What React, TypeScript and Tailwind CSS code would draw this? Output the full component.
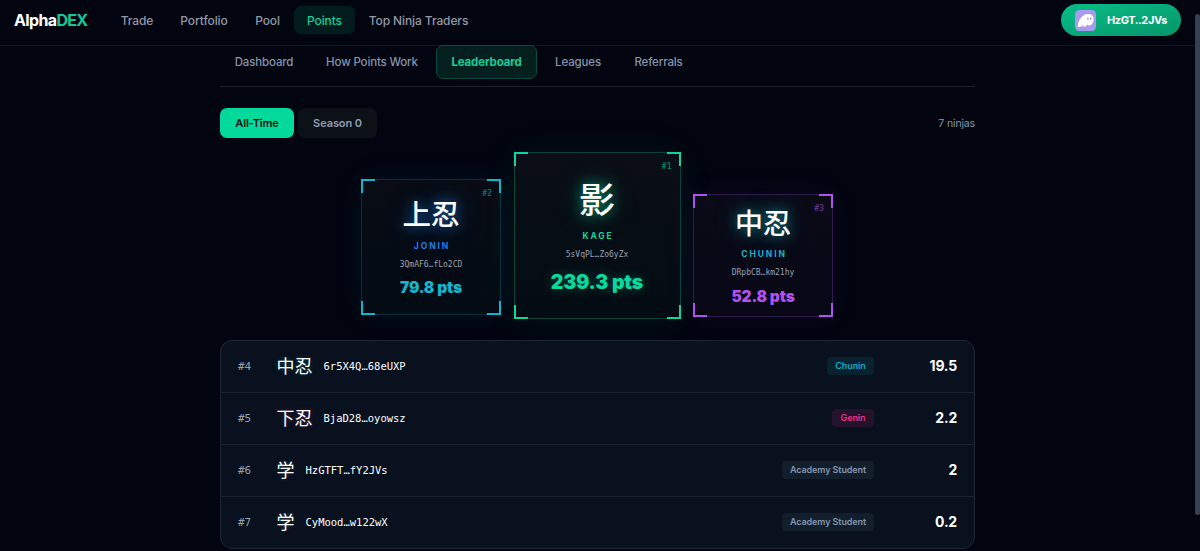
import clsx from "clsx";

const navLinks = [
  { label: "Trade", width: "w-[56px]" },
  { label: "Portfolio", width: "w-[74px]" },
  { label: "Pool", width: "w-[49px]" },
  { label: "Points", width: "w-[61px]", active: true },
  { label: "Top Ninja Traders", width: "w-[123px]" },
];

const tabs = [
  { label: "Dashboard", width: "w-[88px]" },
  { label: "How Points Work", width: "w-[121px]" },
  { label: "Leaderboard", width: "w-[101px]", active: true },
  { label: "Leagues", width: "w-[75px]" },
  { label: "Referrals", width: "w-[79px]" },
];

const podium = [
  {
    place: "#2",
    kanji: "上忍",
    league: "JONIN",
    address: "3QmAF6…fLo2CD",
    points: "79.8 pts",
    card: "w-[140px] h-[136px] mb-1 pt-[15px] border-[#0a2f38] bg-linear-to-b from-[#090c14] to-[#030b15] shadow-[0_0_28px_rgba(6,182,212,0.09)]",
    corner: "border-[#13b5cf]",
    accent: "text-[#13b5cf]",
    glyph: "text-[28.5px] leading-[36px] [text-shadow:0_0_12px_#145aa0,0_0_22px_#0f4078]",
    leagueClass: "mt-[8px] text-[#1f7fe8]",
    pointsClass: "mt-[5px] text-[15.5px]",
  },
  {
    place: "#1",
    kanji: "影",
    league: "KAGE",
    address: "5sVqPL…Zo6yZx",
    points: "239.3 pts",
    card: "w-[167px] h-[167px] pt-[23px] border-[#0a4239] bg-linear-to-b from-[#0b0e16] to-[#040c13] shadow-[0_0_32px_rgba(0,214,155,0.09)]",
    corner: "border-[#0bd8a0]",
    accent: "text-[#0bd8a0]",
    glyph: "text-[35.5px] leading-[44px] [text-shadow:0_0_12px_#068a66,0_0_22px_#046048]",
    leagueClass: "mt-[9px] text-[#0bd8a0]",
    pointsClass: "mt-[9px] text-[19.5px] [text-shadow:0_0_12px_rgba(0,214,155,0.35)]",
  },
  {
    place: "#3",
    kanji: "中忍",
    league: "CHUNIN",
    address: "DRpbCB…km21hy",
    points: "52.8 pts",
    card: "w-[140px] h-[123px] mb-[2px] pt-[9px] border-[#2e1c4a] bg-linear-to-b from-[#0b0b16] to-[#070716] shadow-[0_0_28px_rgba(168,85,247,0.08)]",
    corner: "border-[#b052ee]",
    accent: "text-[#b052ee]",
    glyph: "text-[28px] leading-[36px] [text-shadow:0_0_12px_#0a7886,0_0_22px_#085560]",
    leagueClass: "mt-[7px] text-[#12b3cb]",
    pointsClass: "mt-[6px] text-[15.5px]",
  },
];

const rows = [
  { rank: "#4", kanji: "中忍", address: "6r5X4Q…68eUXP", league: "Chunin", points: "19.5", badge: "w-[47px] bg-[#09222f] text-[#12abc6]", glow: "[text-shadow:0_0_4px_#0b4555]" },
  { rank: "#5", kanji: "下忍", address: "BjaD28…oyowsz", league: "Genin", points: "2.2", badge: "w-[42px] bg-[#25122b] text-[#ee2f8b]", glow: "[text-shadow:0_0_4px_#5a1a3c]" },
  { rank: "#6", kanji: "学", address: "HzGTFT…fY2JVs", league: "Academy Student", points: "2", badge: "w-[92px] bg-[#131e2d] text-[#8496ad]", glow: "[text-shadow:0_0_4px_#263345]" },
  { rank: "#7", kanji: "学", address: "CyMood…w122wX", league: "Academy Student", points: "0.2", badge: "w-[92px] bg-[#131e2d] text-[#8496ad]", glow: "[text-shadow:0_0_4px_#263345]" },
];

const mono = "font-['DejaVu_Sans_Mono','Liberation_Mono',monospace]";
const cjk = "font-['Noto_Sans_CJK_JP',sans-serif]";

function GhostIcon() {
  return (
    <svg width="21" height="21" viewBox="0 0 21 21" className="shrink-0">
      <rect width="21" height="21" rx="4.5" fill="#a99bec" />
      <path
        d="M2.7 15.7C3.4 10 7.4 4 13.2 4c3.4 0 5.4 2.2 5.4 5.2 0 3.3-2.1 6.3-4.6 6.3-.9 0-1.3-.5-1.3-1.2-1 1.7-2.2 2.5-3.4 2.5-1 0-1.5-.7-1.3-1.7-.9 1.1-2 2-3.5 2-1.1 0-1.9-.5-1.800-1.400Z"
        fill="#fff"
      />
      <ellipse cx="12.9" cy="8.8" rx=".8" ry="1.3" fill="#a99bec" />
      <ellipse cx="15.8" cy="8.8" rx=".8" ry="1.3" fill="#a99bec" />
    </svg>
  );
}

function Corners({ color }: { color: string }) {
  return (
    <>
      <span className={clsx("absolute -top-px -left-px size-[14px] border-t-2 border-l-2", color)} />
      <span className={clsx("absolute -top-px -right-px size-[14px] border-t-2 border-r-2", color)} />
      <span className={clsx("absolute -bottom-px -left-px size-[14px] border-b-2 border-l-2", color)} />
      <span className={clsx("absolute -right-px -bottom-px size-[14px] border-r-2 border-b-2", color)} />
    </>
  );
}

export default function App() {
  return (
    <div className="relative h-[551px] w-[1200px] overflow-hidden bg-[#02040f] font-['Inter',sans-serif] text-white">
      <header className="flex h-[46px] items-start justify-between border-b border-[#101a25] pr-[19px] pl-[14px]">
        <div className="flex">
          <div className="w-[95px] pt-[9px] text-[16px] leading-[22px] font-bold tracking-[-0.65px]">
            Alpha<span className="text-[#14c896]">DEX</span>
          </div>
          <nav className="flex gap-[2px] pt-[6px]">
            {navLinks.map((link) => (
              <a
                key={link.label}
                className={clsx(
                  "flex h-7 items-center justify-center rounded-[7px] pt-px text-[12px] font-medium tracking-[-0.1px] whitespace-nowrap",
                  link.width,
                  link.active ? "bg-[#021c1d] text-[#10cf9a]" : "text-[#9499a8]"
                )}
              >
                {link.label}
              </a>
            ))}
          </nav>
        </div>
        <button className="mt-1 flex h-8 w-[120px] items-center rounded-full bg-linear-to-br from-[#08bd87] to-[#069669] pl-[14px] text-[11px] font-bold tracking-[-0.4px]">
          <GhostIcon />
          <span className="ml-[11px]">HzGT..2JVs</span>
        </button>
      </header>

      <main className="ml-[220px] w-[755px]">
        <nav className="-mt-px flex h-[42px] gap-[3.5px] border-b border-[#1b232f]">
          {tabs.map((tab) => (
            <a
              key={tab.label}
              className={clsx(
                "flex h-[34px] items-center justify-center rounded-[7px] pt-[2px] text-[11.5px] tracking-[-0.15px] whitespace-nowrap",
                tab.width,
                tab.active
                  ? "border border-[#0a4a42] bg-[#03201f] font-bold text-[#10cf9a]"
                  : "font-medium text-[#8496ad]"
              )}
            >
              {tab.label}
            </a>
          ))}
        </nav>

        <div className="mt-[21px] flex h-[30px] items-center justify-between">
          <div className="flex gap-1 text-[11px] font-semibold">
            <button className="h-[30px] w-[74px] rounded-[7px] bg-[#04d99c] tracking-[-0.15px] text-[#04140f]">All-Time</button>
            <button className="h-[30px] w-[79px] rounded-[7px] bg-[#0c1118] tracking-[-0.1px] text-[#8c9cb2]">Season 0</button>
          </div>
          <span className="pt-px text-[10.5px] tracking-[-0.15px] text-[#8496ad]">7 ninjas</span>
        </div>

        <section className="mt-[14px] flex h-[167px] items-end gap-[12.5px] pl-[141px]">
          {podium.map((p) => (
            <div key={p.place} className={clsx("relative flex flex-col items-center border", p.card)}>
              <Corners color={p.corner} />
              <span className={clsx("absolute top-[8px] right-[8px] text-[8px] leading-[12px] font-bold opacity-50", mono, p.accent)}>
                {p.place}
              </span>
              <div className={clsx("font-medium", cjk, p.glyph)}>{p.kanji}</div>
              <div className={clsx("pl-[2px] text-[8.5px] leading-[15px] font-bold tracking-[1.9px]", p.leagueClass)}>{p.league}</div>
              <div className={clsx("mt-[5px] text-[8px] leading-[12px] text-[#98a1b0]", mono)}>{p.address}</div>
              <div className={clsx("leading-[24px] font-black tracking-[-0.15px] whitespace-nowrap", p.accent, p.pointsClass)}>{p.points}</div>
            </div>
          ))}
        </section>

        <section className="mt-[21px] overflow-hidden rounded-xl border border-[#1d2835] bg-[#09111e]">
          {rows.map((row) => (
            <div
              key={row.rank}
              className="flex h-[52px] items-center border-b border-[#1b2532] pr-[17px] pl-[17px] last:h-[51px] last:border-b-0"
            >
              <span className={clsx("w-[38.5px] pt-px text-[11px] text-[#8fa1b8]", mono)}>{row.rank}</span>
              <span className={clsx("pb-[3px] text-[18px] leading-[24px]", cjk, row.glow)}>{row.kanji}</span>
              <span className={clsx("ml-[11px] text-[10.5px]", mono)}>{row.address}</span>
              <span className={clsx("mr-px mb-px ml-auto flex h-[18px] items-center justify-center rounded-[4px] text-[9px] font-semibold tracking-[-0.1px] whitespace-nowrap", row.badge)}>
                {row.league}
              </span>
              <span className="w-[82px] pb-[2px] text-right text-[14px] font-bold tracking-[-0.2px]">{row.points}</span>
            </div>
          ))}
        </section>
      </main>

      <div className="absolute top-[14px] right-0 h-[501px] w-[5px] rounded-full bg-[#354052]" />
    </div>
  );
}
